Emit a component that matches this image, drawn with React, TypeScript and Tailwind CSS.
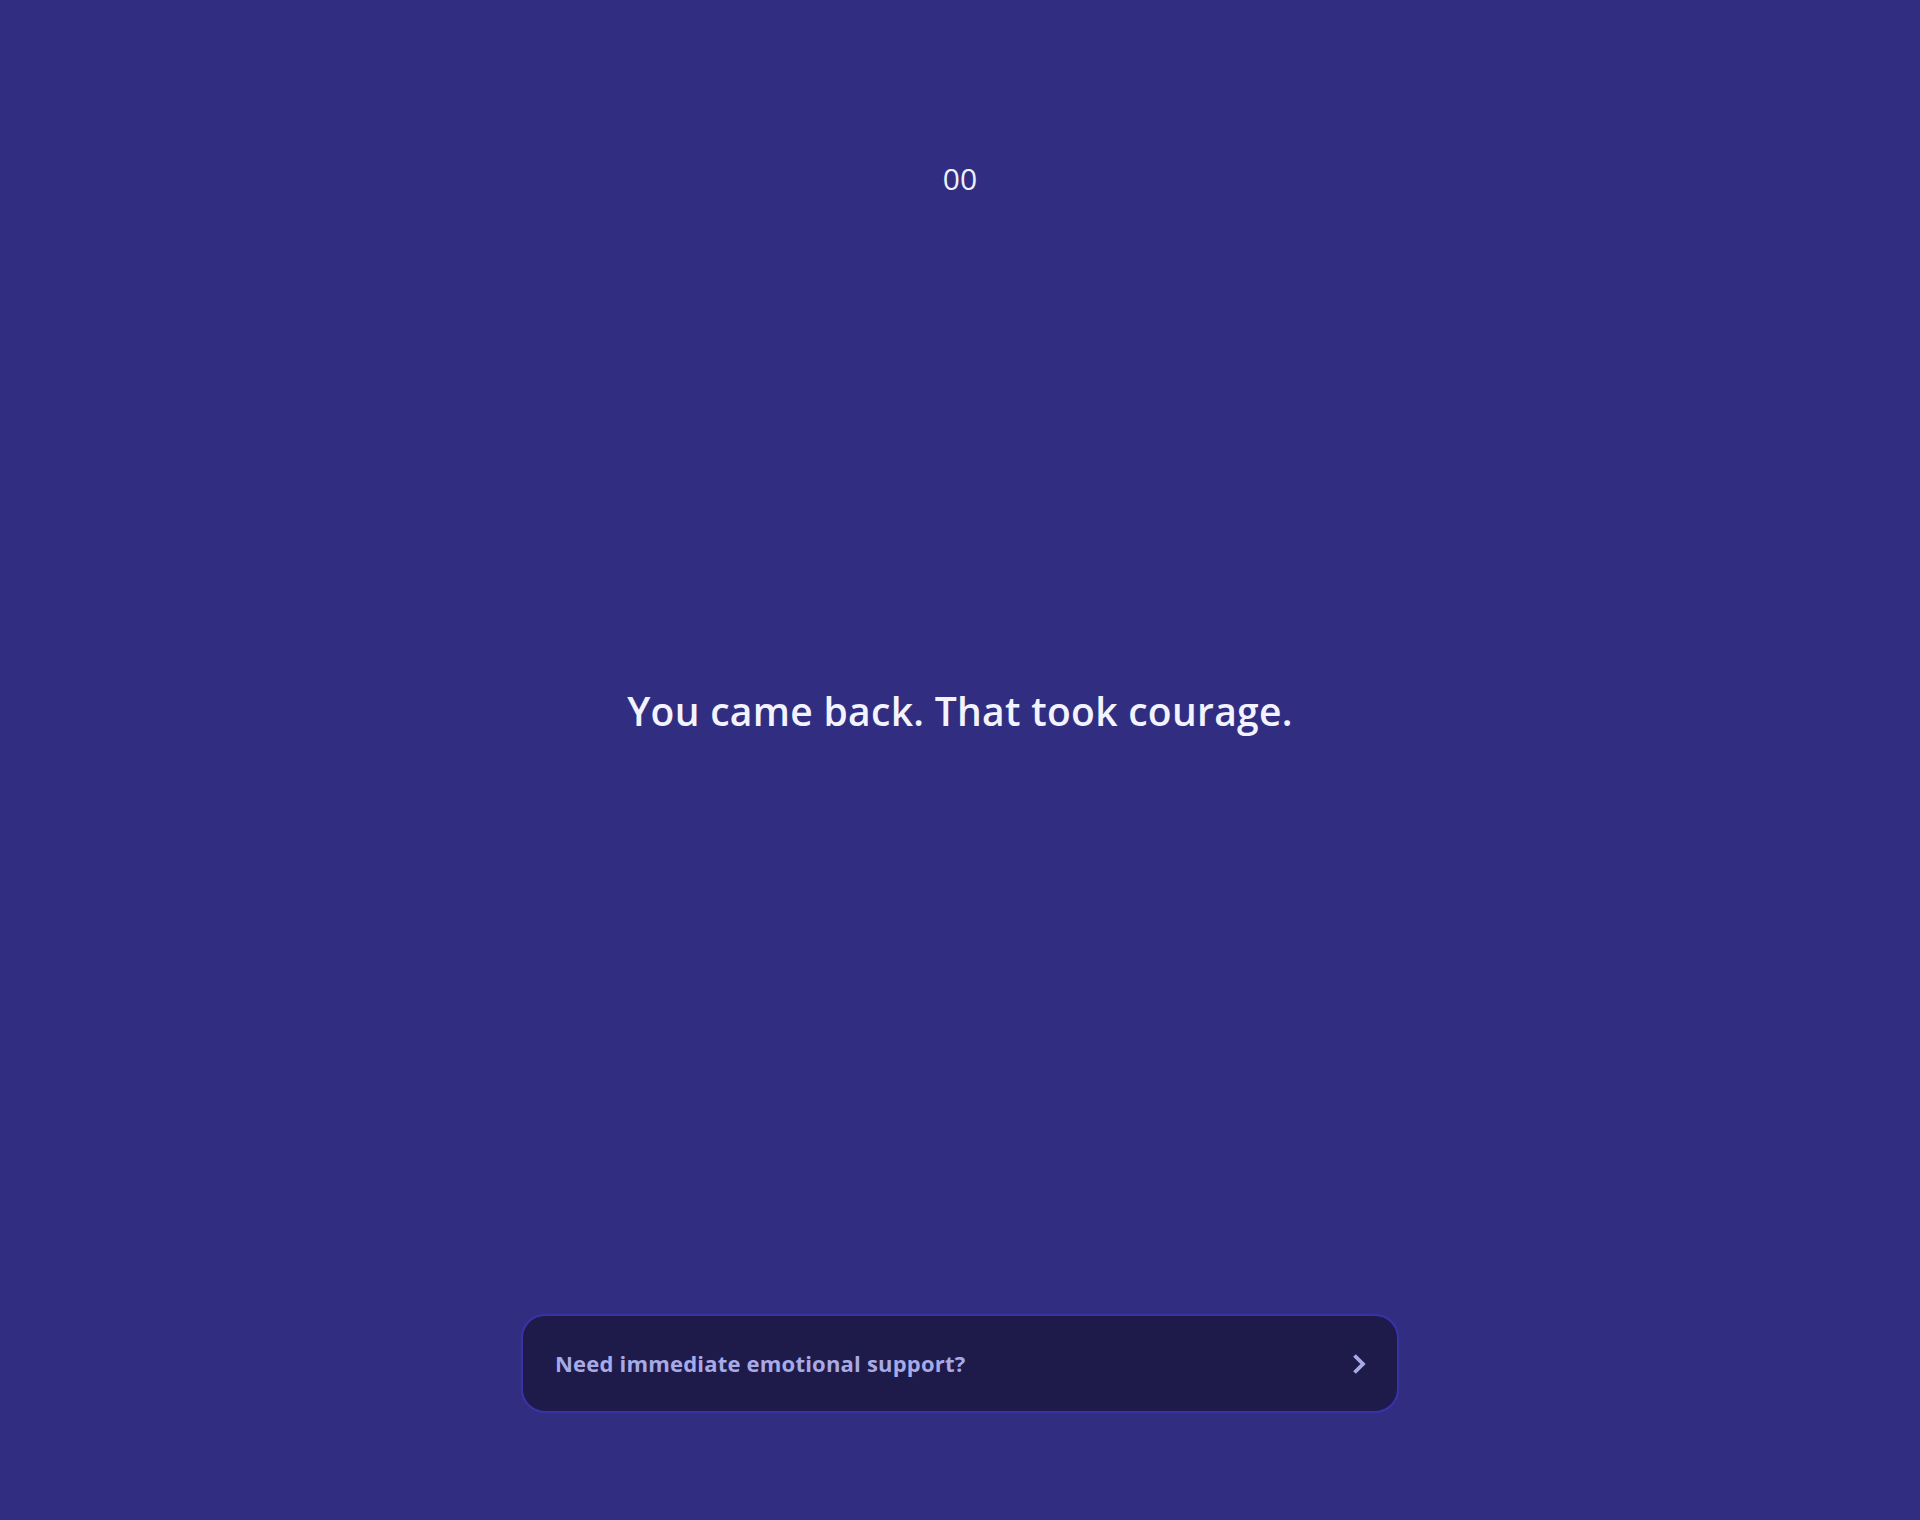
export default function App() {
  return (
    <div
      className="min-h-screen w-full flex flex-col items-center bg-[#312e81] text-white"
      style={{ fontFamily: '"Segoe UI", "Open Sans", "Noto Sans", sans-serif' }}
    >
      <div className="pt-[160px] text-[30px] leading-[38px] font-normal text-[#eef0ff]">00</div>
      <div className="flex-1 w-full flex items-center justify-center pb-[90px]">
        <h1 className="text-[39px] leading-[46px] font-semibold tracking-[0.3px] text-[#f3f3ff] text-center">
          You came back. That took courage.
        </h1>
      </div>
      <div className="w-[878px] pb-[107px]">
        <button
          type="button"
          className="w-full h-[99px] flex items-center justify-between pl-8 pr-[30px] rounded-3xl border-2 border-[#3a33a8] bg-[#1e1b4b] text-[#a7aae4]"
        >
          <span className="text-[22px] font-bold tracking-[0.2px]">Need immediate emotional support?</span>
          <svg width="16" height="22" viewBox="0 0 16 22" fill="none" aria-hidden="true">
            <path d="M3.5 2.5 L12 11 L3.5 19.5" stroke="currentColor" strokeWidth="3.8" strokeLinecap="butt" strokeLinejoin="miter" />
          </svg>
        </button>
      </div>
    </div>
  );
}
